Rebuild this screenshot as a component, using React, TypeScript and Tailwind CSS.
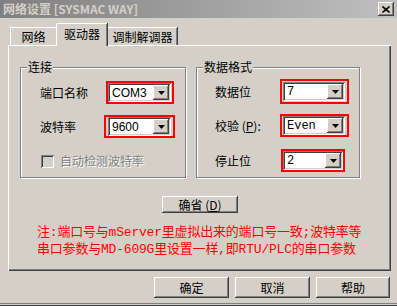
import React from 'react'

const raised =
  'bg-[#d4d0c8] shadow-[inset_-1px_-1px_0_#404040,inset_1px_1px_0_#ffffff,inset_-2px_-2px_0_#808080]'
const sunken =
  'shadow-[inset_1px_1px_0_#808080,inset_-1px_-1px_0_#ffffff,inset_2px_2px_0_#404040,inset_-2px_-2px_0_#d4d0c8]'

const cjk = "font-['SimSun','Noto_Sans_CJK_SC',sans-serif]"

function Combo({ value, width, mono }: { value: string; width: string; mono?: boolean }) {
  return (
    <div className={`${width} h-[19px] bg-white ${sunken} flex items-center p-[2px]`}>
      <span
        className={`flex-1 pl-[2px] text-[12px] leading-none text-black ${
          mono ? "font-['Liberation_Mono',monospace]" : "font-['Liberation_Sans',sans-serif]"
        }`}
      >
        {value}
      </span>
      <div className={`w-[16px] h-[15px] ${raised} flex items-center justify-center`}>
        <svg width="7" height="4" viewBox="0 0 7 4">
          <path d="M0 0h7L3.5 4z" fill="#000" />
        </svg>
      </div>
    </div>
  )
}

function GroupBox({ title, width, pad, children }: { title: string; width: string; pad: string; children: React.ReactNode }) {
  return (
    <div
      className={`relative ${width} h-[111px] border border-[#808080] shadow-[inset_1px_1px_0_#ffffff,1px_1px_0_#ffffff] ${pad}`}
    >
      <span className="absolute left-[6px] top-[-9px] bg-[#d4d0c8] px-[1px] text-[12px] leading-[16px] text-black">
        {title}
      </span>
      {children}
    </div>
  )
}

function Button({ children, className = '' }: { children: React.ReactNode; className?: string }) {
  return (
    <div className={`${raised} flex items-center justify-center text-[12px] text-black ${className}`}>
      {children}
    </div>
  )
}

export default function App() {
  return (
    <div className={`w-[397px] h-[306px] bg-[#d4d0c8] overflow-hidden flex flex-col ${cjk}`}>
      {/* title bar */}
      <div className="h-[18px] flex items-center justify-between bg-gradient-to-r from-[#808080] to-[#c0c0c0] pl-[3px] pr-[3px]">
        <span className="text-[12px] font-bold text-[#d4d0c8] leading-none font-['Noto_Sans_CJK_SC',sans-serif]">
          网络设置 [SYSMAC WAY]
        </span>
        <div className={`w-[16px] h-[14px] ${raised} flex items-center justify-center`}>
          <svg width="8" height="7" viewBox="0 0 8 7">
            <path d="M0.5 0.5l7 6M7.5 0.5l-7 6" stroke="#000" strokeWidth="1.6" />
          </svg>
        </div>
      </div>

      {/* tabs */}
      <div className="mt-[5px] h-[22px] flex items-end pl-[10px]">
        <div className="w-[46px] h-[18px] border-l border-t border-white rounded-tl-[2px] flex items-center justify-center text-[12px] text-black">
          网络
        </div>
        <div className="relative top-[1px] z-10 w-[51px] h-[23px] bg-[#d4d0c8] border-l border-t border-white rounded-tl-[2px] shadow-[inset_-1px_0_0_#808080,1px_0_0_#404040] flex items-center justify-center text-[12px] text-black pb-[2px]">
          驱动器
        </div>
        <div className="ml-[1px] w-[69px] h-[18px] border-t border-white shadow-[inset_-1px_0_0_#808080,1px_0_0_#404040] flex items-center justify-center text-[12px] text-black">
          调制解调器
        </div>
      </div>

      {/* tab panel */}
      <div className="ml-[8px] w-[383px] h-[226px] border-l border-t border-white shadow-[inset_-1px_-1px_0_#404040,inset_-2px_-2px_0_#808080] pt-[21px] pl-[11px] flex flex-col">
        <div className="flex gap-[10px]">
          <GroupBox title="连接" width="w-[166px]" pad="pt-[13px] pl-[19px]">
            <div className="flex flex-col">
              <div className="flex items-center">
                <span className="w-[66px] text-[12px] text-black">端口名称</span>
                <div className="border-2 border-[#ff0000] pr-[1px]">
                  <Combo value="COM3" width="w-[63px]" />
                </div>
              </div>
              <div className="mt-[11px] flex items-center">
                <span className="w-[64px] text-[12px] text-black">波特率</span>
                <div className="border-2 border-[#ff0000] px-[2px]">
                  <Combo value="9600" width="w-[63px]" />
                </div>
              </div>
              <div className="mt-[14px] flex items-center pl-[1px]">
                <div className={`w-[13px] h-[13px] bg-[#d4d0c8] ${sunken}`} />
                <span className="ml-[6px] text-[12px] text-[#808080] [text-shadow:1px_1px_0_#ffffff]">
                  自动检测波特率
                </span>
              </div>
            </div>
          </GroupBox>

          <GroupBox title="数据格式" width="w-[164px]" pad="pt-[11px] pl-[18px]">
            <div className="flex flex-col">
              <div className="flex items-center">
                <span className="w-[65px] text-[12px] text-black">数据位</span>
                <div className="border-2 border-[#ff0000] pl-[1px] pr-[2px] py-[1px]">
                  <Combo value="7" width="w-[62px]" mono />
                </div>
              </div>
              <div className="mt-[10px] flex items-center">
                <span className="w-[65px] text-[12px] text-black">
                  校验 (<u>P</u>):
                </span>
                <div className="border-2 border-[#ff0000] pl-[1px] pr-[2px]">
                  <Combo value="Even" width="w-[62px]" mono />
                </div>
              </div>
              <div className="mt-[12px] flex items-center">
                <span className="w-[66px] text-[12px] text-black">停止位</span>
                <div className="border-2 border-[#ff0000]">
                  <Combo value="2" width="w-[60px]" mono />
                </div>
              </div>
            </div>
          </GroupBox>
        </div>

        <div className="mt-[18px] flex justify-center pr-[11px]">
          <Button className="w-[76px] h-[17px]">
            确省 (<u>D</u>)
          </Button>
        </div>

        <div className="mt-[11px] pl-[17px] text-[13px] leading-[17px] text-[#ff0000] font-['Liberation_Mono','SimSun','Noto_Sans_CJK_SC',monospace] tracking-[-0.2px]">
          <div>注:端口号与mServer里虚拟出来的端口号一致;波特率等</div>
          <div>串口参数与MD-609G里设置一样,即RTU/PLC的串口参数</div>
        </div>
      </div>

      {/* bottom buttons */}
      <div className="mt-[6px] flex justify-end gap-[6px] pr-[7px]">
        <Button className="w-[75px] h-[21px]">确定</Button>
        <Button className="w-[75px] h-[21px]">取消</Button>
        <Button className="w-[74px] h-[21px]">帮助</Button>
      </div>

      <div className="mt-auto h-[3px] border-t border-[#808080] bg-[#d4d0c8] shadow-[inset_0_-1px_0_#404040]" />
    </div>
  )
}
